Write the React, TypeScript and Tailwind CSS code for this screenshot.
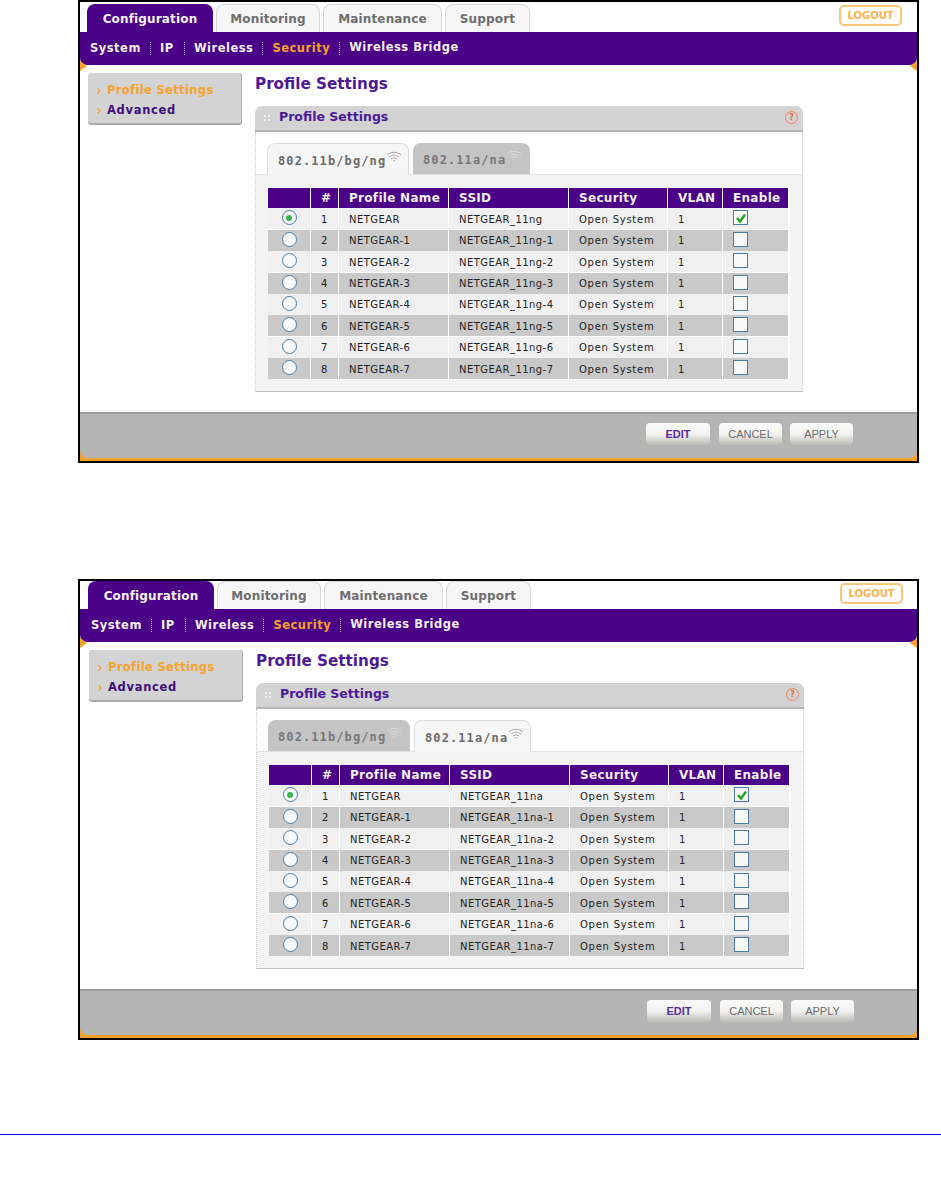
const font = "font-['DejaVu_Sans',sans-serif]";

const rows = [1, 2, 3, 4, 5, 6, 7, 8];

const Wifi = ({ color }: { color: string }) => (
  <svg width="16" height="12" viewBox="0 0 16 12" fill="none" stroke={color} strokeWidth="1" className="-mt-[8px]">
    <path d="M1 4C5 .4 11 .4 15 4" />
    <path d="M3 6C6 3.600 10 3.600 13 6" />
    <path d="M5 8C7 6.600 9 6.600 11 8" />
    <path d="M6.800 10C7.500 9.500 8.500 9.500 9.200 10" />
  </svg>
);

const Chevron = () => (
  <svg width="4" height="6" viewBox="0 0 4 6" fill="none" stroke="#f5a32b" strokeWidth="1.300" className="shrink-0">
    <path d="M.5 .5L3 3L.5 5.500" />
  </svg>
);

const Radio = ({ on }: { on: boolean }) => (
  <span className="flex h-[15px] w-[15px] items-center justify-center rounded-full border-[1.5px] border-[#4a7ba6] bg-[#f7f9fa]">
    {on && <span className="h-[6px] w-[6px] rounded-full bg-[#35b548]" />}
  </span>
);

const Check = ({ on }: { on: boolean }) => (
  <span className="flex h-[15px] w-[15px] items-center justify-center border-[1.5px] border-[#4a7ba6] bg-[#f8f8f8]">
    {on && (
      <svg width="12" height="12" viewBox="0 0 12 12" fill="none" stroke="#1fa51f" strokeWidth="2.400">
        <path d="M2 6l3 3.500 5-7" />
      </svg>
    )}
  </span>
);

const Tab = ({ label, active, w }: { label: string; active: boolean; w: string }) => (
  <div
    className={`flex h-[28px] items-center justify-center rounded-t-[8px] pt-[1px] text-[12px] font-bold tracking-[0.15px] ${w} ${
      active ? "bg-[#4b0088] text-[#f2f2f2]" : "border border-b-0 border-[#d8d8d8] bg-[#f6f6f6] text-[#6e6e6e]"
    }`}
  >
    {label}
  </div>
);

const WifiTab = ({ label, active, w }: { label: string; active: boolean; w: string }) => (
  <div
    className={`flex h-[31px] items-center rounded-t-[8px] pl-[10px] pt-[2px] text-[12px] font-bold tracking-[1.1px] ${w} ${
      active
        ? "relative z-10 -mb-px h-[32px] border border-b-0 border-[#dcdcdc] bg-[#f6f6f6] text-[#6b6b6b]"
        : "bg-[#c4c4c4] text-[#777777]"
    }`}
  >
    <span className="font-['DejaVu_Sans_Mono',monospace]">{label}</span>
    <Wifi color={active ? "#a8a8a8" : "#dddddd"} />
  </div>
);

const Cell = ({ children, bg, cls = "" }: { children?: React.ReactNode; bg: string; cls?: string }) => (
  <div className={`flex items-center pl-[10px] text-[10px] text-[#222222] ${bg} ${cls}`}>{children}</div>
);

const Head = ({ children }: { children?: React.ReactNode }) => (
  <div className="flex items-center bg-[#4b0088] pl-[10px] text-[12px] font-bold tracking-[0.3px] text-[#f0f0f0]">{children}</div>
);

const Btn = ({ label, cls }: { label: string; cls: string }) => (
  <div
    className={`flex h-[22px] items-center justify-center rounded-[4px] bg-gradient-to-b from-[#fbfbfb] via-[#f2f2f0] to-[#bdbcb6] font-['Liberation_Sans',sans-serif] text-[11px] ${cls}`}
  >
    {label}
  </div>
);

const Sep = () => <span className="mx-[9px] h-[13px] border-l border-dotted border-[#b9a6cf]" />;

const Frame = ({ suffix, first, cls }: { suffix: string; first: boolean; cls: string }) => (
  <div className={`relative flex w-[841px] flex-col overflow-hidden border-2 border-black bg-white ${font} ${cls}`}>
    {/* top tabs */}
    <div className={`relative flex shrink-0 items-end gap-[3px] ${first ? "h-[30px] pl-[7px]" : "h-[28px] pl-[8px]"}`}>
      <Tab label="Configuration" active w="w-[126px]" />
      <Tab label="Monitoring" active={false} w="w-[104px]" />
      <Tab label="Maintenance" active={false} w="w-[119px]" />
      <Tab label="Support" active={false} w="w-[85px]" />
      <div
        className={`absolute flex h-[21px] w-[63px] items-center justify-center rounded-[5px] border-2 border-[#fbc57a] text-[10px] font-bold text-[#f9b24f] ${
          first ? "right-[15px] top-[3px]" : "right-[14px] top-[2px]"
        }`}
      >
        LOGOUT
      </div>
    </div>

    {/* purple nav */}
    <div className="relative shrink-0">
      <div
        className={`flex h-[33px] items-center rounded-b-[7px] bg-[#4b0088] text-[11.500px] font-bold tracking-[0.5px] text-[#f0f0f0] ${
          first ? "pl-[10px]" : "pl-[11px]"
        }`}
      >
        <span>System</span>
        <Sep />
        <span className="w-[15px]">IP</span>
        <Sep />
        <span>Wireless</span>
        <Sep />
        <span className="text-[#f5a32b]">Security</span>
        <Sep />
        <span className="-mt-px">Wireless Bridge</span>
      </div>
      <div className="absolute -bottom-[6px] left-0 h-0 w-0 border-y-[5px] border-l-[7px] border-y-transparent border-l-[#f5a32b]" />
      <div className="absolute -bottom-[6px] right-0 h-0 w-0 border-y-[5px] border-r-[7px] border-y-transparent border-r-[#f5a32b]" />
    </div>

    {/* body */}
    <div className={`flex flex-1 items-start pt-[8px] ${first ? "pl-[8px]" : "pl-[9px]"}`}>
      <div className="flex h-[52px] w-[154px] shrink-0 flex-col gap-[5px] rounded-[3px] border-b-2 border-r border-[#ababab] bg-[#d3d3d3] pl-[9px] pt-[10px] text-[11.500px] font-bold leading-[15px]">
        <div className="flex items-center gap-[6px] tracking-[0.35px] text-[#f5a32b]">
          <Chevron />
          Profile Settings
        </div>
        <div className="flex items-center gap-[6px] tracking-[0.7px] text-[#3f0f7a]">
          <Chevron />
          Advanced
        </div>
      </div>

      <div className="ml-[13px] w-[548px]">
        <div className="h-[33px] text-[15.200px] font-bold leading-[22px] text-[#4b1a96]">Profile Settings</div>
        <div className="flex h-[26px] items-center gap-[9px] rounded-t-[7px] border-b-2 border-[#b5b5b5] bg-[#d3d3d3] pb-[1px] pl-[9px] text-[12.500px] font-bold text-[#4b1a96]">
          <span className="h-[6px] w-[6px] border-x-2 border-dotted border-[#eeeeee]" />
          <span>Profile Settings</span>
          <span className="ml-auto mr-[5px] flex h-[13px] w-[13px] items-center justify-center rounded-full border border-[#f0815a] text-[8px] text-[#e8663c]">
            ?
          </span>
        </div>
        <div className="border-x border-dotted border-[#c8c8c8] bg-white">
          <div className="flex gap-[4px] pl-[11px] pt-[11px]">
            <WifiTab label="802.11b/bg/ng" active={first} w="w-[142px]" />
            <WifiTab label="802.11a/na" active={!first} w="w-[117px]" />
          </div>
          <div className="border-b border-t border-b-[#bdbdbd] border-t-[#e4e4e4] bg-[#f3f3f3] px-[12px] pb-[12px] pt-[13px]">
            <div className="grid grid-cols-[42px_27px_109px_119px_98px_54px_65px] grid-rows-[20px_repeat(8,21px)] gap-x-[1px] gap-y-[0.4px] bg-white">
              <Head />
              <Head>#</Head>
              <Head>Profile Name</Head>
              <Head>SSID</Head>
              <Head>Security</Head>
              <Head>VLAN</Head>
              <Head>Enable</Head>
              {rows.map((n) => {
                const bg = n % 2 ? "bg-[#f0f0f0]" : "bg-[#c9c9c9]";
                const tail = n === 1 ? "" : `-${n - 1}`;
                return [
                  <Cell key={`r${n}`} bg={bg} cls="justify-center !pl-0 pb-[2px]">
                    <Radio on={n === 1} />
                  </Cell>,
                  <Cell key={`n${n}`} bg={bg} cls="pt-[1px] tracking-[0.45px]">{n}</Cell>,
                  <Cell key={`p${n}`} bg={bg} cls="pt-[1px] tracking-[0.45px]">NETGEAR{tail}</Cell>,
                  <Cell key={`s${n}`} bg={bg} cls="pt-[1px] tracking-[0.45px]">NETGEAR_{suffix}{tail}</Cell>,
                  <Cell key={`o${n}`} bg={bg} cls="pt-[1px] tracking-[0.75px]">Open System</Cell>,
                  <Cell key={`v${n}`} bg={bg} cls="pt-[1px]">1</Cell>,
                  <Cell key={`c${n}`} bg={bg} cls="pb-[2px]">
                    <Check on={n === 1} />
                  </Cell>,
                ];
              })}
            </div>
          </div>
        </div>
      </div>
    </div>

    {/* footer on the orange strip, the corners let it show through */}
    <div className="shrink-0 bg-[#f5a32b]">
      <div
        className={`flex h-[46px] items-center justify-end rounded-b-[8px] border-t-2 border-[#9c9c9c] bg-[#b5b5b5] pb-[4px] ${
          first ? "pr-[64px]" : "pr-[63px]"
        }`}
      >
        <Btn label="EDIT" cls="w-[64px] font-bold text-[#5c2a9d]" />
        <Btn label="CANCEL" cls="ml-[9px] w-[63px] text-[#6b6b6b]" />
        <Btn label="APPLY" cls="ml-[8px] w-[63px] text-[#6b6b6b]" />
      </div>
      <div className="h-[3px]" />
    </div>
  </div>
);

export default function App() {
  return (
    <div className="h-[1202px] w-[941px] overflow-hidden bg-white">
      <Frame suffix="11ng" first cls="ml-[78px] h-[463px]" />
      <Frame suffix="11na" first={false} cls="ml-[78px] mt-[116px] h-[461px]" />
      <div className="mt-[94px] h-px w-full bg-[#0000ff]" />
    </div>
  );
}
